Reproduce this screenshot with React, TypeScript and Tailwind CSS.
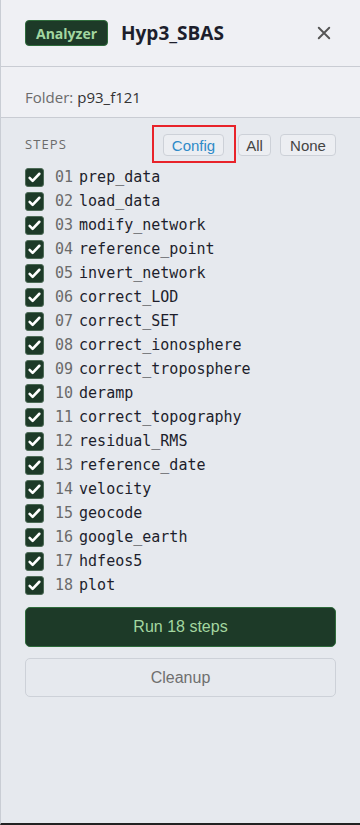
import React, { useState } from 'react';

const STEPS = [
  'prep_data',
  'load_data',
  'modify_network',
  'reference_point',
  'invert_network',
  'correct_LOD',
  'correct_SET',
  'correct_ionosphere',
  'correct_troposphere',
  'deramp',
  'correct_topography',
  'residual_RMS',
  'reference_date',
  'velocity',
  'geocode',
  'google_earth',
  'hdfeos5',
  'plot',
];

const CheckIcon = () => (
  <svg viewBox="0 0 20 20" className="w-[15px] h-[15px]" fill="none">
    <path d="M3.5 10.5l4 4 9-9.5" stroke="#fff" strokeWidth="3.4" strokeLinecap="round" strokeLinejoin="round" />
  </svg>
);

const App: React.FC = () => {
  const [checked, setChecked] = useState<boolean[]>(STEPS.map(() => true));
  const count = checked.filter(Boolean).length;

  const toggle = (i: number) => {
    setChecked(prev => prev.map((v, j) => (j === i ? !v : v)));
  };

  const smallBtn = "h-[22px] flex items-center justify-center border border-[#cdd1d8] rounded-[4px] bg-[#eceef2] text-[15px] leading-none font-['Liberation_Sans',Arial,sans-serif]";

  return (
    <div className="w-[360px] h-[825px] flex flex-col bg-[#e6e9ee] border-l border-[#c9cdd4] border-b-2 border-b-[#222] font-['Open_Sans','Noto_Sans',sans-serif]">
      <div className="h-[67px] shrink-0 flex items-center pl-[24px] pr-[28px] bg-[#eff0f4] border-b border-[#c9ccd3]">
        <span className="h-[26px] px-[10px] flex items-center rounded-[4px] bg-[#1d3a28] border border-[#2e6b3b] text-[#a3d6a0] text-[14px] font-bold">
          Analyzer
        </span>
        <span className="ml-[13px] text-[19px] font-bold text-[#1d1e2c]">Hyp3_SBAS</span>
        <button className="ml-auto text-[#555] w-[16px] h-[16px] flex items-center justify-center">
          <svg viewBox="0 0 16 16" className="w-[14px] h-[14px]">
            <path d="M2 2l12 12M14 2L2 14" stroke="#555" strokeWidth="2.2" strokeLinecap="round" />
          </svg>
        </button>
      </div>

      <div className="h-[51px] shrink-0 flex items-center pt-[10px] pl-[24px] bg-[#eff0f4] border-b border-[#c9ccd3] text-[15px]">
        <span className="text-[#6b6b6b]">Folder:</span>
        <span className="ml-[4px] text-[#333]">p93_f121</span>
      </div>

      <div className="flex-1 px-[24px] pt-[15px]">
        <div className="flex items-center h-[24px]">
          <span className="text-[13px] text-[#6b6b6b] tracking-[1.1px]">STEPS</span>
          <div className="ml-auto flex items-center">
            <div className="relative">
              <button className={smallBtn + ' w-[61px] text-[#2f8ac8]'}>Config</button>
              <div className="absolute left-[-11px] top-[-9px] w-[84px] h-[38px] border-2 border-[#e8232a] pointer-events-none" />
            </div>
            <button className={smallBtn + ' ml-[14px] w-[33px] text-[#444]'}>All</button>
            <button className={smallBtn + ' ml-[9px] w-[56px] text-[#444]'}>None</button>
          </div>
        </div>

        <div className="mt-[8px] flex flex-col">
          {STEPS.map((s, i) => (
            <label key={s} className="h-[24px] flex items-center cursor-pointer" onClick={() => toggle(i)}>
              <span
                className={
                  checked[i]
                    ? 'w-[19px] h-[19px] rounded-[3px] bg-[#1d3a28] border border-[#4d6b57] flex items-center justify-center'
                    : 'w-[19px] h-[19px] rounded-[3px] bg-white border border-[#888]'
                }
              >
                {checked[i] && <CheckIcon />}
              </span>
              <span className="ml-[11px] text-[15px] font-['DejaVu_Sans_Mono','Liberation_Mono',monospace]">
                <span className="text-[#6b6b6b]">{String(i + 1).padStart(2, '0')}</span>
                <span className="ml-[6px] text-[#1d1e2c]">{s}</span>
              </span>
            </label>
          ))}
        </div>

        <button className="mt-[10px] w-full h-[40px] rounded-[5px] bg-[#1d3a28] border border-[#2e6b3b] text-[#a3d6a0] text-[16px] font-['Liberation_Sans',Arial,sans-serif]">
          Run {count} steps
        </button>
        <button className="mt-[11px] w-full h-[39px] rounded-[5px] bg-[#e6e9ee] border border-[#cdd1d8] text-[#6f6f6f] text-[16px] font-['Liberation_Sans',Arial,sans-serif]">
          Cleanup
        </button>
      </div>
    </div>
  );
};

export default App;
